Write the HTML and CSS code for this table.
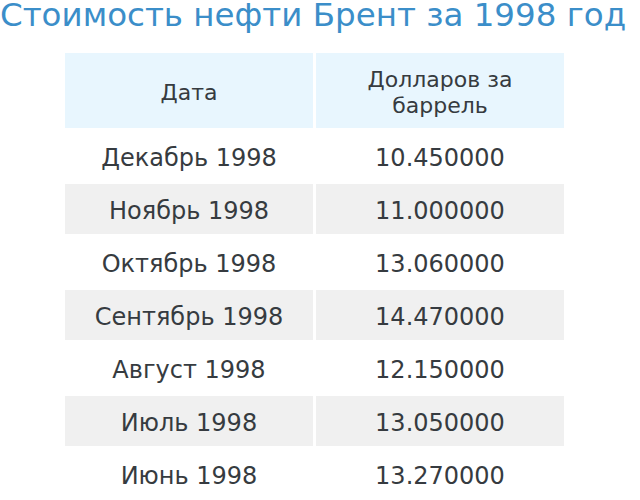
FILE: index.html
```html
<!DOCTYPE html>
<html lang="ru">
<head>
<meta charset="utf-8">
<title>Стоимость нефти Брент за 1998 год</title>
<link rel="stylesheet" href="styles.css">
</head>
<body>
<h1 class="title">Стоимость нефти Брент за 1998 год</h1>
<table class="prices">
  <thead>
    <tr><th>Дата</th><th>Долларов за<br>баррель</th></tr>
  </thead>
  <tbody>
    <tr><td>Декабрь 1998</td><td>10.450000</td></tr>
    <tr class="alt"><td>Ноябрь 1998</td><td>11.000000</td></tr>
    <tr><td>Октябрь 1998</td><td>13.060000</td></tr>
    <tr class="alt"><td>Сентябрь 1998</td><td>14.470000</td></tr>
    <tr><td>Август 1998</td><td>12.150000</td></tr>
    <tr class="alt"><td>Июль 1998</td><td>13.050000</td></tr>
    <tr><td>Июнь 1998</td><td>13.270000</td></tr>
  </tbody>
</table>
</body>
</html>
```
FILE: styles.css
```css
html, body {
  margin: 0;
  padding: 0;
  background: #ffffff;
}
body {
  font-family: "DejaVu Sans", Verdana, sans-serif;
  color: #363b40;
}
.title {
  margin: 0;
  padding: 0;
  font-size: 32.5px;
  line-height: 31px;
  font-weight: normal;
  color: #3b8ec9;
  white-space: nowrap;
}
.prices {
  border-collapse: separate;
  border-spacing: 3px;
  margin: 19px 0 0 62px;
}
.prices th,
.prices td {
  width: 248px;
  padding: 0;
  text-align: center;
  vertical-align: middle;
  font-weight: normal;
}
.prices th {
  height: 75px;
  padding-top: 4px;
  box-sizing: border-box;
  font-size: 22px;
  line-height: 26px;
  background: #e8f6fe;
}
.prices td {
  height: 50px;
  padding-top: 3px;
  box-sizing: border-box;
  font-size: 24px;
  line-height: 28px;
}
.prices tr.alt td {
  background: #f0f0f0;
}
```
